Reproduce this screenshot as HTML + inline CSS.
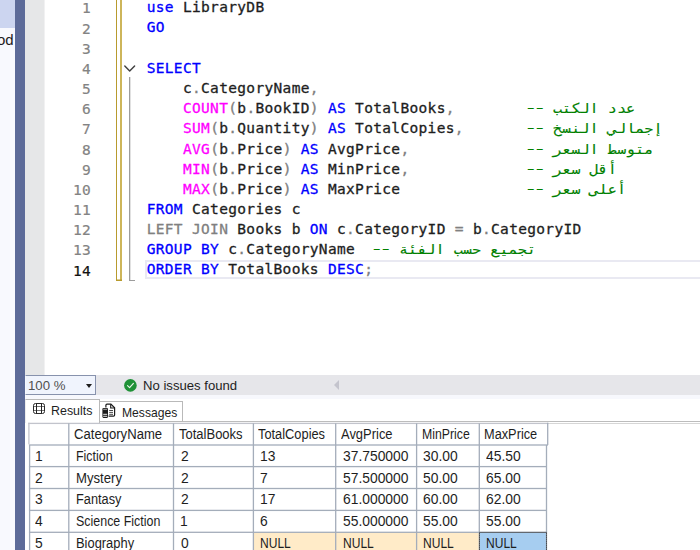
<!DOCTYPE html>
<html lang="en"><head><meta charset="utf-8"><title>SQL Query - LibraryDB</title>
<style>
*{box-sizing:border-box}
html,body{margin:0;padding:0}
body{width:700px;height:550px;overflow:hidden;background:#fff;position:relative;font-family:"Liberation Sans",sans-serif}
.abs{position:absolute}
#side{left:0;top:0;width:15px;height:550px;background:#f8f9fe;overflow:hidden}
#sidetop{left:0;top:0;width:15px;height:28px;background:#ccd5f0}
#sidetxt{right:1.3px;top:31px;font-size:15px;line-height:18px;color:#1e1e1e;white-space:nowrap;transform-origin:100% 50%;transform:scaleX(1)}
#band{left:15px;top:0;width:10px;height:550px;background:#5d6b99}
#gutter{left:25px;top:0;width:20px;height:375px;background:#e6e7e8;border-right:1px solid #f1f1f2}
#y1{left:116px;top:0;width:1px;height:281px;background:#b89b2e}
#y2{left:120px;top:0;width:2px;height:281px;background:#cdb55a}
#y3{left:116px;top:279px;width:6px;height:2px;background:linear-gradient(to bottom,rgba(184,155,46,0.5) 0,rgba(184,155,46,0.5) 1px,#b89b2e 1px,#b89b2e 2px)}
#fold{left:129px;top:77px;width:2px;height:204px;background:linear-gradient(to right,#9c9c9c 0,#9c9c9c 1px,rgba(156,156,156,0.3) 1px,rgba(156,156,156,0.3) 2px)}
#foldt{left:129px;top:280px;width:6px;height:1px;background:#9c9c9c}
#chev{left:123px;top:63px}
#curline{left:145px;top:260px;width:560px;height:19px;border:2px solid #e9e9f2;background:#fff}
.cl,.ln{position:absolute;font-family:"DejaVu Sans Mono","Liberation Mono",monospace;font-size:14.5px;line-height:20px;height:20px;white-space:pre;color:#1e1e1e;letter-spacing:0.33px;-webkit-text-stroke:0.3px}
.cl{left:146.7px}
.ln{font-size:14.5px;letter-spacing:0.33px;left:45px;width:46px;text-align:right;color:#838383;-webkit-text-stroke:0.2px}
.ln.cur{color:#111}
.k{color:#0000ff} .f{color:#ff00ff} .g{color:#808080} .c{color:#008000}
.ar{display:inline-block;transform-origin:50% 77%;transform:scaleY(0.9);margin-left:-1.5px;font-size:15.2px;line-height:18px;letter-spacing:0;-webkit-text-stroke:0.15px}
.dd{display:inline-block;transform-origin:50% 50%;transform:translate(-0.6px,-0.6px) scale(1.6,0.9);-webkit-text-stroke:0}
#status{left:25px;top:375px;width:675px;height:20px;background:#e6e6ea}
#strip{left:25px;top:395px;width:675px;height:4px;background:#f7f8fd}
#zoom{left:25px;top:375px;width:71px;height:20px;background:#f0f4fd;border:1px solid #8792ad;border-left-color:#f6f8fd}
#arrow{left:85.5px;top:384px;width:0;height:0;border-left:3.5px solid transparent;border-right:3.5px solid transparent;border-top:4px solid #1e1e1e}
#ok{left:124px;top:378.5px}
#sarrow{left:333.5px;top:380px;width:0;height:0;border-top:5.2px solid transparent;border-bottom:5.2px solid transparent;border-right:5.6px solid #c4c4cd}
#tab1{left:25px;top:399px;width:75px;height:24px;background:#fff;border:1px solid #b9b9b9;border-bottom:none;border-left-color:#ececec}
#tab2{left:99px;top:401px;width:84px;height:21px;background:#fff;border:1px solid #b9b9b9}
#tabline{left:183px;top:421px;width:517px;height:1px;background:#bcbcbc}
#tabline2{left:548px;top:423px;width:152px;height:1px;background:#d6d6d6}
#ico1{left:32px;top:402px}
#ico2{left:101px;top:402px}
.tx{position:absolute;white-space:pre;transform-origin:0 0;line-height:16px;color:#1e1e1e}
.gt{font-size:13.6px}
.ut{font-size:13.33px}
.zt{color:#505050}
</style></head>
<body>
<div id="side" class="abs"><div id="sidetop" class="abs"></div><div id="sidetxt" class="abs">od</div></div>
<div id="band" class="abs"></div>
<div id="gutter" class="abs"></div>
<div id="y1" class="abs"></div><div id="y2" class="abs"></div><div id="y3" class="abs"></div>
<div id="fold" class="abs"></div><div id="foldt" class="abs"></div>
<svg id="chev" class="abs" width="14" height="12" viewBox="0 0 14 12"><path d="M1.8 2.9 L6.7 7.9 L11.6 2.9" fill="none" stroke="#404040" stroke-width="1.45" stroke-linecap="round" stroke-linejoin="round"/></svg>
<div id="curline" class="abs"></div>
<div class="cl" style="top:-3px"><span class="k">use</span> LibraryDB</div>
<div class="ln" style="top:-2px">1</div>
<div class="cl" style="top:17px"><span class="k">GO</span></div>
<div class="ln" style="top:19px">2</div>
<div class="cl" style="top:38px"></div>
<div class="ln" style="top:39px">3</div>
<div class="cl" style="top:58px"><span class="k">SELECT</span></div>
<div class="ln" style="top:59px">4</div>
<div class="cl" style="top:78px">    c<span class="g">.</span>CategoryName<span class="g">,</span></div>
<div class="ln" style="top:79px">5</div>
<div class="cl" style="top:98px">    <span class="f">COUNT</span><span class="g">(</span>b<span class="g">.</span>BookID<span class="g">)</span><span class="k"> AS</span> TotalBooks<span class="g">,</span>        <span class="c"><span class="dd">-</span><span class="dd">-</span> <span class="ar">عدد الكتب</span></span></div>
<div class="ln" style="top:99px">6</div>
<div class="cl" style="top:118px">    <span class="f">SUM</span><span class="g">(</span>b<span class="g">.</span>Quantity<span class="g">)</span><span class="k"> AS</span> TotalCopies<span class="g">,</span>       <span class="c"><span class="dd">-</span><span class="dd">-</span> <span class="ar">إجمالي النسخ</span></span></div>
<div class="ln" style="top:119px">7</div>
<div class="cl" style="top:139px">    <span class="f">AVG</span><span class="g">(</span>b<span class="g">.</span>Price<span class="g">)</span><span class="k"> AS</span> AvgPrice<span class="g">,</span>             <span class="c"><span class="dd">-</span><span class="dd">-</span> <span class="ar">متوسط السعر</span></span></div>
<div class="ln" style="top:140px">8</div>
<div class="cl" style="top:159px">    <span class="f">MIN</span><span class="g">(</span>b<span class="g">.</span>Price<span class="g">)</span><span class="k"> AS</span> MinPrice<span class="g">,</span>             <span class="c"><span class="dd">-</span><span class="dd">-</span> <span class="ar">أقل سعر</span></span></div>
<div class="ln" style="top:160px">9</div>
<div class="cl" style="top:179px">    <span class="f">MAX</span><span class="g">(</span>b<span class="g">.</span>Price<span class="g">)</span><span class="k"> AS</span> MaxPrice              <span class="c"><span class="dd">-</span><span class="dd">-</span> <span class="ar">أعلى سعر</span></span></div>
<div class="ln" style="top:180px">10</div>
<div class="cl" style="top:199px"><span class="k">FROM</span> Categories c</div>
<div class="ln" style="top:200px">11</div>
<div class="cl" style="top:219px"><span class="g">LEFT JOIN</span> Books b <span class="k">ON</span> c<span class="g">.</span>CategoryID <span class="g">=</span> b<span class="g">.</span>CategoryID</div>
<div class="ln" style="top:220px">12</div>
<div class="cl" style="top:239px"><span class="k">GROUP BY</span> c<span class="g">.</span>CategoryName  <span class="c"><span class="dd">-</span><span class="dd">-</span> <span class="ar">تجميع حسب الفئة</span></span></div>
<div class="ln" style="top:240px">13</div>
<div class="cl" style="top:259px"><span class="k">ORDER BY</span> TotalBooks <span class="k">DESC</span><span class="g">;</span></div>
<div class="ln cur" style="top:261px">14</div>
<div id="status" class="abs"></div>
<div id="strip" class="abs"></div>
<div id="zoom" class="abs"></div>
<div id="arrow" class="abs"></div>
<svg id="ok" class="abs" width="13" height="13" viewBox="0 0 13 13"><circle cx="6.4" cy="6.4" r="6.3" fill="#1f9137"/><path d="M3.5 6.7 L5.6 8.7 L9.4 4.4" fill="none" stroke="#eef6ee" stroke-width="1.15" stroke-linecap="round" stroke-linejoin="round"/></svg>
<div id="sarrow" class="abs"></div>
<div id="tabline" class="abs"></div>
<div id="tabline2" class="abs"></div>
<div id="tab2" class="abs"></div>
<div id="tab1" class="abs"></div>
<svg id="ico1" class="abs" width="14" height="13" viewBox="0 0 14 13"><path d="M1.5 4.5H12.5M1.5 8.5H12.5" stroke="#777" stroke-width="1" fill="none"/><path d="M4.5 1.5V11.5M9.5 1.5V11.5" stroke="#222" stroke-width="1" fill="none"/><rect x="1.5" y="1.5" width="11" height="10" rx="2" fill="none" stroke="#2a2a2a" stroke-width="1"/></svg>
<svg id="ico2" class="abs" width="16" height="17" viewBox="0 0 16 17"><path d="M4.9 5.6V3.2Q4.9 2.1 6 2.1H9.9L13.6 5.8V13.1Q13.6 14.2 12.5 14.2H7.6" fill="none" stroke="#1a1a1a" stroke-width="1.2"/><path d="M9.7 2.2V6H13.5" fill="none" stroke="#1a1a1a" stroke-width="1.1"/><path d="M8.2 8.5H12M8.2 10.4H12M8.2 12.3H12" stroke="#333" stroke-width="0.9"/><rect x="1.4" y="5.9" width="5.6" height="10" rx="1.1" fill="#1a1a1a"/><path d="M2.2 12.3H6.2M2.2 14.3H6.2" stroke="#fff" stroke-width="0.9"/><path d="M2.2 7.4H6.2" stroke="#8c8c8c" stroke-width="1.3"/></svg>
<svg id="grid" class="abs" width="700" height="550" viewBox="0 0 700 550" style="left:0;top:0"><rect x="253.4" y="532.3" width="225.9" height="22.700000000000045" fill="#ffebc8"/><rect x="479.3" y="532.3" width="67.19999999999999" height="22.700000000000045" fill="#a6cdf0"/><rect x="28.250000000000004" y="422.75" width="520.1" height="1.3" fill="#c2c4cc"/><rect x="28.250000000000004" y="422.75" width="1.3" height="21.600000000000023" fill="#c2c4cc"/><rect x="547.0500000000001" y="422.75" width="1.3" height="22.25000000000002" fill="#a4adba"/><rect x="68.14999999999999" y="423.4" width="1.3" height="136.60000000000002" fill="#a4adba"/><rect x="172.85" y="423.4" width="1.3" height="136.60000000000002" fill="#a4adba"/><rect x="252.75" y="423.4" width="1.3" height="136.60000000000002" fill="#a4adba"/><rect x="335.05" y="423.4" width="1.3" height="136.60000000000002" fill="#a4adba"/><rect x="415.95000000000005" y="423.4" width="1.3" height="136.60000000000002" fill="#a4adba"/><rect x="478.65000000000003" y="423.4" width="1.3" height="136.60000000000002" fill="#a4adba"/><rect x="28.950000000000003" y="445.0" width="1.3" height="115.0" fill="#a4adba"/><rect x="545.85" y="445.0" width="1.3" height="115.0" fill="#a4adba"/><rect x="28.950000000000003" y="444.35" width="519.05" height="1.3" fill="#a4adba"/><rect x="28.950000000000003" y="465.95" width="517.85" height="1.3" fill="#a4adba"/><rect x="28.950000000000003" y="487.85" width="517.85" height="1.3" fill="#a4adba"/><rect x="28.950000000000003" y="509.75" width="517.85" height="1.3" fill="#a4adba"/><rect x="28.950000000000003" y="531.65" width="517.85" height="1.3" fill="#a4adba"/><rect x="479.5" y="532.4" width="66.99999999999999" height="30" fill="none" stroke="#111" stroke-width="1" stroke-dasharray="1 1"/></svg>
<span id="h0" class="tx gt" style="left:73.89px;top:425.60px;transform:scale(0.9639,1.05)">CategoryName</span>
<span id="h1" class="tx gt" style="left:178.59px;top:425.60px;transform:scale(0.9565,1.05)">TotalBooks</span>
<span id="h2" class="tx gt" style="left:258.45px;top:425.60px;transform:scale(0.9437,1.05)">TotalCopies</span>
<span id="h3" class="tx gt" style="left:340.77px;top:425.60px;transform:scale(0.9520,1.05)">AvgPrice</span>
<span id="h4" class="tx gt" style="left:421.88px;top:425.60px;transform:scale(0.9022,1.05)">MinPrice</span>
<span id="h5" class="tx gt" style="left:484.41px;top:425.60px;transform:scale(0.9393,1.05)">MaxPrice</span>
<span id="r0c0" class="tx gt" style="left:35.30px;top:447.50px;transform:scale(1.0191,1.05)">1</span>
<span id="r0c1" class="tx gt" style="left:75.90px;top:447.50px;transform:scale(0.9124,1.05)">Fiction</span>
<span id="r0c2" class="tx gt" style="left:180.50px;top:447.50px;transform:scale(1.0191,1.05)">2</span>
<span id="r0c3" class="tx gt" style="left:260.20px;top:447.50px;transform:scale(1.0191,1.05)">13</span>
<span id="r0c4" class="tx gt" style="left:342.50px;top:447.50px;transform:scale(1.0191,1.05)">37.750000</span>
<span id="r0c5" class="tx gt" style="left:423.40px;top:447.50px;transform:scale(1.0191,1.05)">30.00</span>
<span id="r0c6" class="tx gt" style="left:485.60px;top:447.50px;transform:scale(1.0191,1.05)">45.50</span>
<span id="r1c0" class="tx gt" style="left:35.30px;top:469.50px;transform:scale(1.0191,1.05)">2</span>
<span id="r1c1" class="tx gt" style="left:75.90px;top:469.50px;transform:scale(0.9660,1.05)">Mystery</span>
<span id="r1c2" class="tx gt" style="left:180.50px;top:469.50px;transform:scale(1.0191,1.05)">2</span>
<span id="r1c3" class="tx gt" style="left:260.20px;top:469.50px;transform:scale(1.0191,1.05)">7</span>
<span id="r1c4" class="tx gt" style="left:342.50px;top:469.50px;transform:scale(1.0191,1.05)">57.500000</span>
<span id="r1c5" class="tx gt" style="left:423.40px;top:469.50px;transform:scale(1.0191,1.05)">50.00</span>
<span id="r1c6" class="tx gt" style="left:485.60px;top:469.50px;transform:scale(1.0191,1.05)">65.00</span>
<span id="r2c0" class="tx gt" style="left:35.30px;top:490.50px;transform:scale(1.0191,1.05)">3</span>
<span id="r2c1" class="tx gt" style="left:75.90px;top:490.50px;transform:scale(0.9390,1.05)">Fantasy</span>
<span id="r2c2" class="tx gt" style="left:180.50px;top:490.50px;transform:scale(1.0191,1.05)">2</span>
<span id="r2c3" class="tx gt" style="left:260.20px;top:490.50px;transform:scale(1.0191,1.05)">17</span>
<span id="r2c4" class="tx gt" style="left:342.50px;top:490.50px;transform:scale(1.0191,1.05)">61.000000</span>
<span id="r2c5" class="tx gt" style="left:423.40px;top:490.50px;transform:scale(1.0191,1.05)">60.00</span>
<span id="r2c6" class="tx gt" style="left:485.60px;top:490.50px;transform:scale(1.0191,1.05)">62.00</span>
<span id="r3c0" class="tx gt" style="left:35.30px;top:512.50px;transform:scale(1.0191,1.05)">4</span>
<span id="r3c1" class="tx gt" style="left:75.90px;top:512.50px;transform:scale(0.9159,1.05)">Science Fiction</span>
<span id="r3c2" class="tx gt" style="left:180.20px;top:512.50px;transform:scale(1.0191,1.05)">1</span>
<span id="r3c3" class="tx gt" style="left:260.20px;top:512.50px;transform:scale(1.0191,1.05)">6</span>
<span id="r3c4" class="tx gt" style="left:342.50px;top:512.50px;transform:scale(1.0191,1.05)">55.000000</span>
<span id="r3c5" class="tx gt" style="left:423.40px;top:512.50px;transform:scale(1.0191,1.05)">55.00</span>
<span id="r3c6" class="tx gt" style="left:485.60px;top:512.50px;transform:scale(1.0191,1.05)">55.00</span>
<span id="r4c0" class="tx gt" style="left:35.30px;top:534.50px;transform:scale(1.0191,1.05)">5</span>
<span id="r4c1" class="tx gt" style="left:75.90px;top:534.50px;transform:scale(0.9491,1.05)">Biography</span>
<span id="r4c2" class="tx gt" style="left:180.50px;top:534.50px;transform:scale(1.0191,1.05)">0</span>
<span id="r4c3" class="tx gt" style="left:260.20px;top:534.50px;transform:scale(0.8853,1.05)">NULL</span>
<span id="r4c4" class="tx gt" style="left:342.50px;top:534.50px;transform:scale(0.8853,1.05)">NULL</span>
<span id="r4c5" class="tx gt" style="left:423.40px;top:534.50px;transform:scale(0.8853,1.05)">NULL</span>
<span id="r4c6" class="tx gt" style="left:485.60px;top:534.50px;transform:scale(0.8853,1.05)">NULL</span>
<span id="zoomt" class="tx ut zt" style="left:27.61px;top:378.00px;transform:scale(0.9903,1)">100 %</span>
<span id="ni" class="tx ut" style="left:142.79px;top:378.00px;transform:scale(0.9850,1)">No issues found</span>
<span id="t1" class="tx ut t1c" style="left:50.79px;top:403.00px;transform:scale(0.9327,1)">Results</span>
<span id="t2" class="tx ut" style="left:121.51px;top:405.00px;transform:scale(0.9100,1)">Messages</span>
</body></html>
